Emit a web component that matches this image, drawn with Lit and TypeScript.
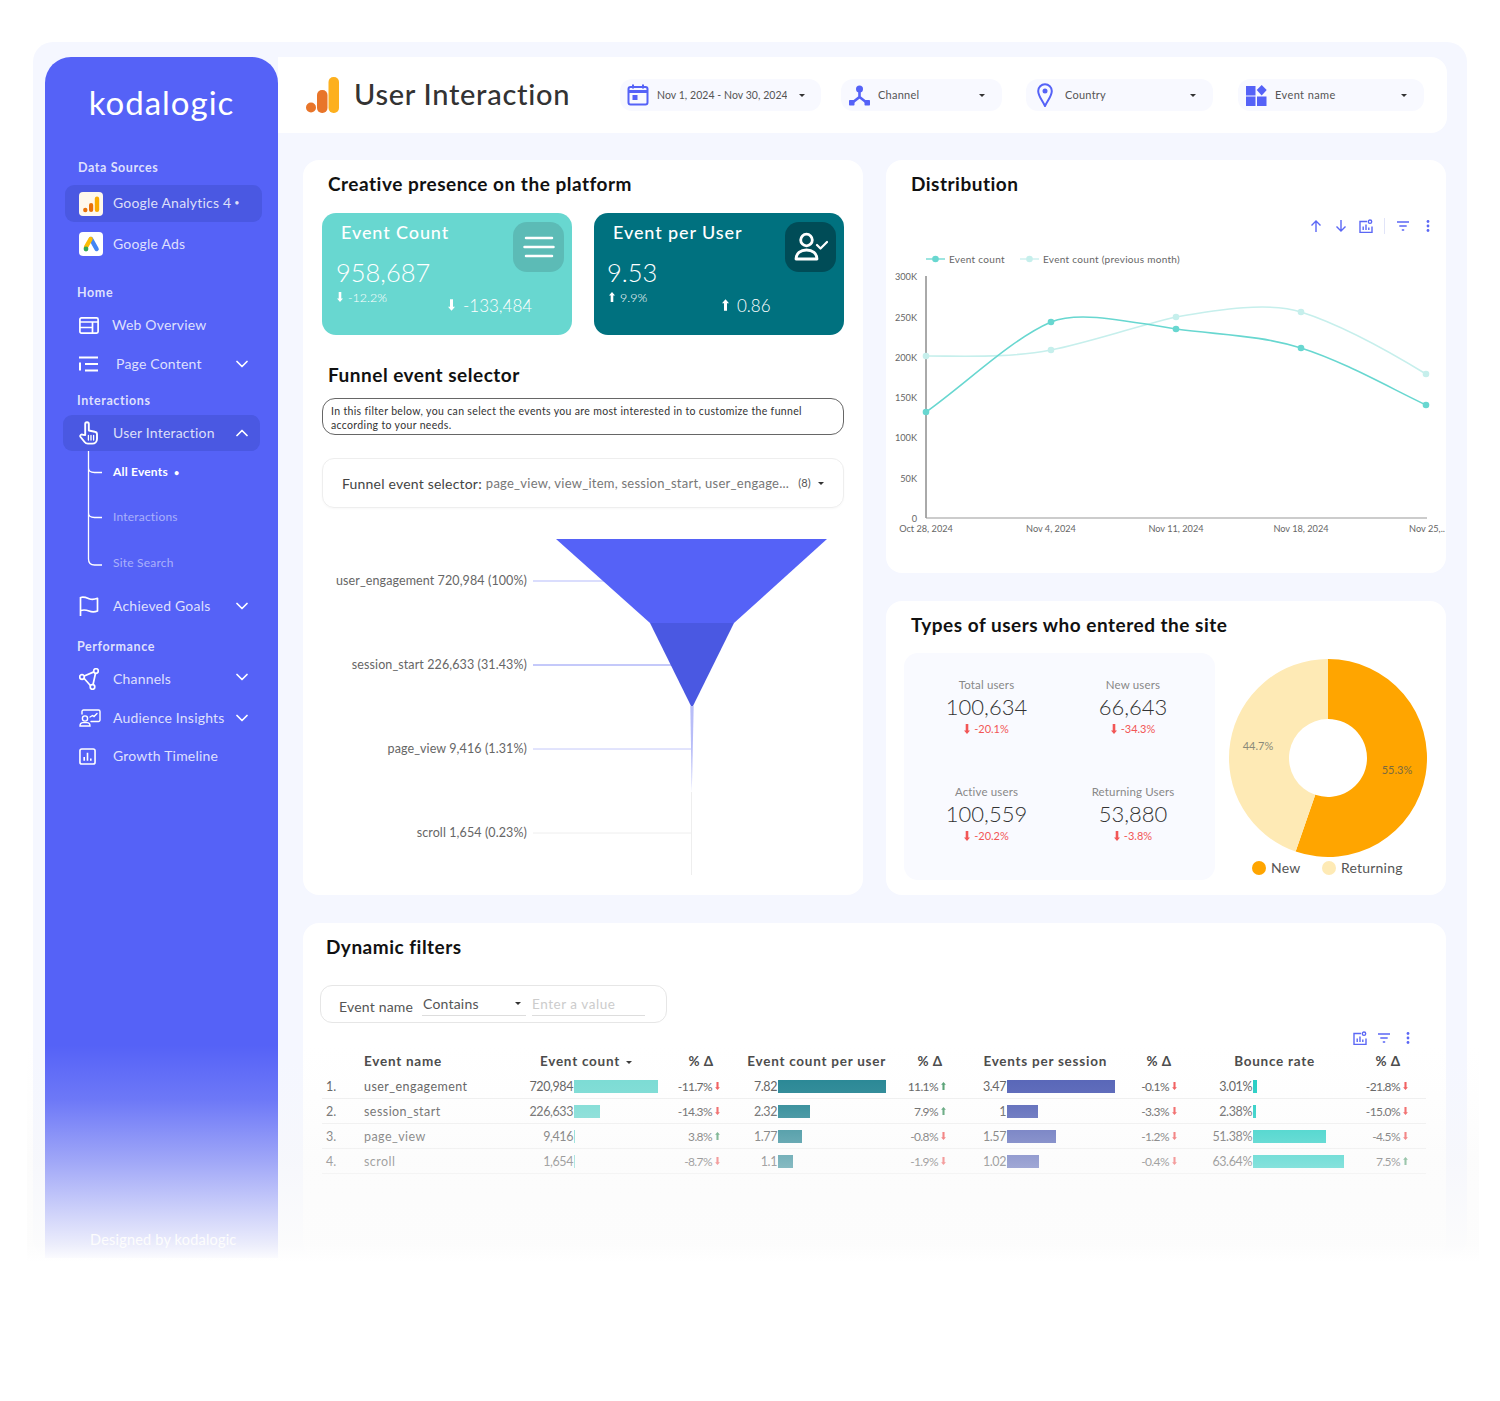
import { LitElement, html, css, svg } from "lit";
import { customElement } from "lit/decorators.js";

const W = "#fff";
const I = {
  ga: html`<svg viewBox="0 0 24 24" width="24" height="24"><rect width="24" height="24" rx="4" fill="#fff8ec"/><circle cx="6.3" cy="18" r="2.2" fill="#e8710a"/><rect x="10" y="11" width="4.2" height="9" rx="2.1" fill="#e8710a"/><rect x="15.8" y="4.5" width="4.4" height="15.5" rx="2.2" fill="#f9ab00"/></svg>`,
  ads: html`<svg viewBox="0 0 24 24" width="24" height="24"><rect width="24" height="24" rx="4" fill="#fff"/><path d="M12 7 L17.6 17" stroke="#4285f4" stroke-width="4.4" stroke-linecap="round"/><path d="M11.6 7 L7 15" stroke="#fbbc04" stroke-width="4.4" stroke-linecap="round"/><circle cx="7" cy="17" r="2.4" fill="#34a853"/></svg>`,
  web: html`<svg viewBox="0 0 20 17" width="20" height="17" fill="none" stroke="#fff" stroke-width="1.7"><rect x=".9" y=".9" width="18.2" height="15.2" rx="1.5"/><path d="M1 5h18M1 10.5h12.5M13.5 5v11" /></svg>`,
  list: html`<svg viewBox="0 0 20 16" width="20" height="16" fill="none" stroke="#fff" stroke-width="2"><path d="M0 1.5h19M6 8h13M6 14.5h13M1 6.5v8"/></svg>`,
  hand: html`<svg viewBox="0 0 20 24" width="20" height="24" fill="none" stroke="#fff" stroke-width="1.9" stroke-linejoin="round" stroke-linecap="round"><path d="M6.2 14 V3 a1.8 1.8 0 0 1 3.6 0 V9.5 l6 1.3 a2.6 2.6 0 0 1 2.2 2.6 V18 a4.6 4.6 0 0 1 -4.6 4.6 H8.8 a4 4 0 0 1 -3.2 -1.6 L1.6 16 a1.6 1.6 0 0 1 2.4 -2.1 Z"/><path d="M9.4 14.5v4.5M12 14.5v4.5M14.6 14.5v4.5" stroke-width="1.3"/></svg>`,
  flag: html`<svg viewBox="0 0 20 22" width="20" height="22" fill="none" stroke="#fff" stroke-width="1.7" stroke-linejoin="round"><path d="M1.5 21V2"/><path d="M1.5 2.5 c3.500 -1 6 .2 8.500 1.200 s5.500 .8 8.500 -.4 V16 c-3 1.200 -6 1 -8.500 0 s-5 -1.500 -8.500 -.5"/></svg>`,
  channels: html`<svg viewBox="0 0 20 22" width="20" height="22" fill="none" stroke="#fff" stroke-width="1.7"><circle cx="3" cy="9" r="2.300"/><circle cx="17" cy="3" r="2.300"/><circle cx="13.500" cy="19" r="2.300"/><path d="M5.200 8 L14.900 3.900M16.500 5.300 L14 16.800M5 10.300 L11.600 17.700"/></svg>`,
  aud: html`<svg viewBox="0 0 22 18" width="22" height="18" fill="none" stroke="#fff" stroke-width="1.4" stroke-linecap="round"><path d="M3 5V2.500A1.500 1.500 0 0 1 4.500 1H19.500A1.500 1.500 0 0 1 21 2.500V11A1.500 1.500 0 0 1 19.500 12.500H12"/><circle cx="6" cy="9.500" r="2.600"/><path d="M1 17c0-2.400 1.200-3.400 3-3.400h4c1.800 0 3 1 3 3.400z"/><path d="M11 8l2.500-1.500 1.500 1 3-3" /></svg>`,
  growth: html`<svg viewBox="0 0 18 18" width="17" height="17" fill="none" stroke="#fff" stroke-width="1.700"><rect x="1" y="1" width="16" height="16" rx="2"/><path d="M5.500 9.500v4M9 5v8.500M12.500 11v2.500"/></svg>`,
  cal: html`<svg viewBox="0 0 22 22" width="22" height="22" fill="none" stroke="#5562f7" stroke-width="2"><rect x="1.500" y="3" width="19" height="17.500" rx="2"/><path d="M1.500 7.500h19" stroke-width="3"/><path d="M6 .5v4M16 .5v4"/><rect x="5.500" y="11" width="5" height="5" fill="#5562f7" stroke="none"/></svg>`,
  chan: html`<svg viewBox="0 0 21 21" width="21" height="21"><circle cx="10.500" cy="4" r="3.500" fill="#5562f7"/><path d="M10.500 6v6L3.500 17.500M10.500 12l7 5.500" fill="none" stroke="#5562f7" stroke-width="2.600"/><rect x="0" y="15" width="5.500" height="5.500" rx=".8" fill="#5562f7"/><rect x="15.500" y="15" width="5.500" height="5.500" rx=".8" fill="#5562f7"/></svg>`,
  pin: html`<svg viewBox="0 0 16 24" width="16" height="24" fill="none" stroke="#5562f7" stroke-width="2"><path d="M8 23 C5 17 1.200 13 1.200 8 a6.800 6.800 0 0 1 13.600 0 C14.800 13 11 17 8 23Z"/><circle cx="8" cy="8" r="2.500" fill="#5562f7" stroke="none"/></svg>`,
  grid: html`<svg viewBox="0 0 21 21" width="21" height="21" fill="#5562f7"><rect x="0" y="1" width="9.500" height="9.500"/><rect x="0" y="11.500" width="9.500" height="9.500"/><rect x="11" y="11.500" width="9.500" height="9.500"/><path d="M15.700 0 L20.700 5 L15.700 10.500 L10.700 5Z"/></svg>`,
  menu: html`<svg viewBox="0 0 32 26" width="32" height="26" fill="none" stroke="#fff" stroke-width="2.500" stroke-linecap="round"><path d="M3 4h26M1.500 13h29M3 22h26"/></svg>`,
  usr: html`<svg viewBox="0 0 34 30" width="34" height="30" fill="none" stroke="#fff" stroke-width="2.800" stroke-linecap="round" stroke-linejoin="round"><circle cx="12.500" cy="8" r="5.800"/><path d="M2 27c0-5.500 4.500-9 10.500-9s10.500 3.500 10.500 9z"/><path d="M23 13l3.500 3.500L33 10" stroke-width="2.200"/></svg>`,
  up: html`<svg class="t" viewBox="0 0 14 14" width="14" height="14" fill="none" stroke="#5b67f5" stroke-width="1.400"><path d="M7 13V2M2.500 6.500L7 2l4.500 4.500"/></svg>`,
  dn: html`<svg class="t" viewBox="0 0 14 14" width="14" height="14" fill="none" stroke="#5b67f5" stroke-width="1.400"><path d="M7 1v11M2.500 7.500L7 12l4.500-4.500"/></svg>`,
  cog: html`<svg class="t" viewBox="0 0 14 14" width="14" height="14" fill="none" stroke="#5b67f5" stroke-width="1.400"><path d="M8 2.500H1v11h12V7.500"/><circle cx="11" cy="2.700" r="1.700"/><path d="M4.200 11V7.500M7 11V5.500M9.800 11V8.500"/></svg>`,
  fil: html`<svg class="t" viewBox="0 0 14 14" width="14" height="14" fill="none" stroke="#5b67f5" stroke-width="1.300"><path d="M1 3h12M3.300 7h7.400M5.800 11h2.400"/></svg>`,
  dots: html`<svg class="t" viewBox="0 0 14 14" width="14" height="14" fill="#5b67f5"><circle cx="7" cy="2.500" r="1.400"/><circle cx="7" cy="7" r="1.400"/><circle cx="7" cy="11.500" r="1.400"/></svg>`,
};

const chev = (up = false) => html`<svg class="chev" viewBox="0 0 12 8" width="12" height="8" fill="none" stroke="#fff" stroke-width="1.700" stroke-linecap="round" stroke-linejoin="round"><path d=${up ? "M1 6.500L6 1.500l5 5" : "M1 1.500l5 5 5-5"}/></svg>`;
const arrow = (up: boolean, c: string) => html`<svg class="arr" viewBox="0 0 6 10" width="6" height="10" fill=${c}><path d=${up ? "M3 0L6 3.500H4.300V10H1.700V3.500H0Z" : "M3 10L6 6.500H4.300V0H1.700V6.500H0Z"}/></svg>`;
const caret = html`<span class="caret"></span>`;
const dot = html`<span class="dot">•</span>`;

const rows = [
  ["1.", "user_engagement", 720984, "-11.7%", 7.82, "11.1%", 3.47, "-0.1%", 3.01, "-21.8%"],
  ["2.", "session_start", 226633, "-14.3%", 2.32, "7.9%", 1, "-3.3%", 2.38, "-15.0%"],
  ["3.", "page_view", 9416, "3.8%", 1.77, "-0.8%", 1.57, "-1.2%", 51.38, "-4.5%"],
  ["4.", "scroll", 1654, "-8.7%", 1.1, "-1.9%", 1.02, "-0.4%", 63.64, "7.5%"],
] as const;

const pct = (s: string) => {
  const up = !s.startsWith("-");
  return html`<span class="pct">${s}${arrow(up, up ? "#4a9a6a" : "#f05050")}</span>`;
};
const bar = (w: number, cls: string) => html`<span class="barcell"><i class=${"bar " + cls} style="width:${Math.max(w, 1)}px"></i></span>`;

const kpis = [
  ["Total users", "100,634", "-20.1%"],
  ["New users", "66,643", "-34.3%"],
  ["Active users", "100,559", "-20.2%"],
  ["Returning Users", "53,880", "-3.8%"],
];

const ax = [["300K", 276], ["250K", 317], ["200K", 357], ["150K", 397], ["100K", 437], ["50K", 478], ["0", 518]] as const;
const xs = [["Oct 28, 2024", 926], ["Nov 4, 2024", 1051], ["Nov 11, 2024", 1176], ["Nov 18, 2024", 1301], ["Nov 25,..", 1426]] as const;
const s1 = [[926, 412], [1051, 322], [1176, 329], [1301, 348], [1426, 405]];
const s2 = [[926, 356], [1051, 350], [1176, 317], [1301, 312], [1426, 374]];

@customElement("app-root")
export class AppRoot extends LitElement {
  static styles = css`
    :host { display: block; position: relative; height: 1401px; overflow: hidden; background: #fff;
      font-family: "Lato", "Open Sans", sans-serif; color: #333; padding: 42px 33px 0; box-sizing: border-box; }
    * { box-sizing: border-box; }
    svg { display: block; flex: none; }
    .frame { height: 1216px; background: #f5f7ff; border-radius: 20px; display: flex; padding: 15px 20px 0 12px; }

    .side { width: 233px; background: #5562f7; border-radius: 26px 26px 0 0; color: #fff; display: flex; flex-direction: column; flex: none; }
    .logo { height: 92px; display: flex; align-items: center; justify-content: center; padding-bottom: 2px; font-size: 33px; font-weight: 400; letter-spacing: 1px; }
    .nav { display: grid; grid-template-rows: 36px 37px 44px 4px 44px 22px 56px 16px 7px 36px 134px 42px 38px 28px 50px 26px; }
    .lab { align-self: center; font-size: 12.5px; font-weight: 700; color: rgba(255,255,255,.82); margin-left: 32px; letter-spacing: .6px; }
    .lab.d { margin-left: 33px; }
    .it { display: flex; align-items: center; margin-left: 18px; width: 197px; padding: 0 0 2px 16px; font-size: 14px; font-weight: 400; color: rgba(255,255,255,.82); letter-spacing: .2px; white-space: nowrap; }
    .it.s { margin-left: 20px; width: 197px; padding-left: 14px; }
    .on { background: #4a58e2; border-radius: 9px; }
    .ic { width: 34px; flex: none; display: flex; margin-top: 2px; }
    .ic.n { width: 33px; }
    .ic.w { width: 37px; }
    .it .chev { margin-left: auto; margin-right: 12px; margin-top: 2px; }
    .it.hi .chev { transform: translateY(-2px); }
    .dot { font-size: 9px; margin-left: 3px; }
    .sub { position: relative; display: grid; grid-template-rows: 42px 48px 44px; }
    .sub svg { position: absolute; left: 42px; top: 0; }
    .sub div { margin-left: 68px; align-self: center; font-size: 12px; color: rgba(255,255,255,.5); letter-spacing: .2px; padding-bottom: 2px; }
    .sub .cur { color: #fff; font-weight: 700; }
    .foot { margin-top: auto; margin-left: 45px; height: 18px; margin-bottom: 9px; font-size: 14.500px; color: #fff; letter-spacing: .2px; white-space: nowrap; }

    .main { flex: 1; min-width: 0; display: flex; flex-direction: column; }
    .top { height: 76px; background: #fff; border-radius: 0 16px 16px 0; display: flex; align-items: center; padding-left: 28px; flex: none; }
    .ttl { margin-left: 15px; width: 266px; font-size: 29px; font-weight: 500; color: #333; letter-spacing: .7px; white-space: nowrap; padding-bottom: 4px; }
    .pill { height: 32px; border-radius: 12px; background: #f8f9ff; display: flex; align-items: center; font-size: 11px; color: #555; letter-spacing: .25px; padding-left: 8px; }
    .pill .lbl { overflow: hidden; white-space: nowrap; flex: 1; margin-left: 8px; padding-bottom: 2px; }
    .pill .caret { margin: 0 17px 0 0; }
    .p1 { width: 201px; padding-left: 7px; }
    .p1 .lbl { flex: none; width: 130px; margin-right: 12px; font-size: 10.500px; letter-spacing: .05px; padding-bottom: 0; }
    .p2 { width: 161px; margin-left: 20px; }
    .p3 { width: 187px; margin-left: 24px; padding-left: 11px; }
    .p3 .lbl { margin-left: 12px; }
    .p4 { width: 186px; margin-left: 25px; }
    .p4 .lbl { letter-spacing: .4px; }
    .caret { display: inline-block; width: 0; height: 0; border: 3px solid transparent; border-top: 3.500px solid #333; border-bottom: 0; flex: none; }

    .body { flex: 1; padding: 27px 1px 0 25px; display: grid; grid-template-columns: 560px 560px; column-gap: 23px; grid-template-rows: 413px 294px 1fr; row-gap: 28px; }
    .card { background: #fff; border-radius: 16px; padding-top: 12px; min-width: 0; }
    .c-left { grid-row: span 2; padding: 12px 19px 0; }
    .c-wide { grid-column: span 2; padding: 12px 0 0 17px; }
    h2 { margin: 0; font-size: 19px; height: 24px; line-height: 24px; font-weight: 700; color: #111; letter-spacing: .5px; white-space: nowrap; }
    .c-left h2 { margin-left: 6px; }
    .c-right h2 { margin-left: 25px; }
    .c-wide h2 { margin-left: 6px; }
    .kr { display: grid; grid-template-columns: 250px 250px; gap: 22px; margin-top: 17px; }
    .kpi { height: 122px; border-radius: 14px; padding: 9px 8px 0 14px; color: #fff; display: grid; grid-template-columns: 1fr 51px; grid-template-rows: 22px 41px auto; background: #68d7d0; }
    .kpi.dark { background: #00717f; padding-left: 13px; }
    .kpi h3 { margin: 0; padding-left: 5px; font-size: 18px; line-height: 20px; font-weight: 500; letter-spacing: .9px; white-space: nowrap; }
    .dark h3 { padding-left: 6px; }
    .ib { grid-column: 2; grid-row: 1 / span 2; height: 50px; border-radius: 14px; background: #5cbbb6; display: flex; align-items: center; justify-content: center; }
    .dark .ib { background: #004c57; }
    .val { font-size: 25.500px; font-weight: 300; line-height: 24px; padding-top: 16px; height: 41px; }
    .dl { grid-column: 1 / span 2; display: flex; align-items: flex-start; }
    .dl .a { width: 112px; display: flex; align-items: center; gap: 5px; height: 24px; font-size: 12.500px; font-weight: 300; padding-left: 1px; }
    .dark .dl .a { width: 115px; padding-left: 2px; }
    .dl .b { display: flex; align-items: center; gap: 8px; height: 40px; font-size: 17px; font-weight: 300; }
    .dl .b .arr { width: 7px; height: 12px; }
    h2.f { margin-top: 28px; }
    .note { margin-top: 11px; height: 37px; border: 1px solid #666; border-radius: 13px; padding: 6px 8px; font-size: 10.500px; line-height: 13.500px; color: #333; letter-spacing: .34px; }
    .sel { margin-top: 23px; height: 50px; border: 1px solid #eee; border-radius: 12px; display: flex; align-items: center; padding: 0 19px; box-shadow: 0 1px 2px rgba(0,0,0,.03); font-size: 14px; color: #444; white-space: nowrap; letter-spacing: .2px; }
    .sel .v { font-size: 13px; color: #777; margin-left: 4px; flex: 1; overflow: hidden; letter-spacing: .25px; }
    .sel .n { font-size: 11px; color: #555; margin: 0 7px 0 3px; transform: translateY(-1px); }
    .funnel text { font-size: 12.500px; fill: #666; text-anchor: end; letter-spacing: .1px; }

    .tools { display: flex; justify-content: flex-end; align-items: center; }
    .t1 { margin-top: 22px; height: 16px; padding-right: 11px; gap: 11px; }
    .t1 .sep { width: 1px; height: 16px; background: #e1e4f8; margin: 0; }
    .chart text { font-size: 9.200px; fill: #666; }
    .chart .lg { font-size: 10px; letter-spacing: .3px; }
    .chart { margin-top: 6px; }

    .trow { display: flex; margin: 16px 0 0 18px; }
    .kbox { width: 311px; height: 227px; background: #f9faff; border-radius: 14px; padding: 24px 9px 0; display: grid; grid-template-columns: 147px 146px; grid-auto-rows: 107px; text-align: center; }
    .kbox .l { height: 16px; line-height: 16px; font-size: 11.500px; color: #888; letter-spacing: .15px; }
    .kbox .v { height: 28px; line-height: 28px; font-size: 22px; color: #333; font-weight: 300; }
    .kbox .d { height: 16px; font-size: 11px; color: #f25656; display: flex; justify-content: center; align-items: center; gap: 4px; padding-bottom: 1px; }
    .pie text { font-size: 11px; }
    .pie .lg { font-size: 14px; letter-spacing: .2px; }

    .flt { width: 347px; height: 38px; margin-top: 26px; border: 1px solid #e6e6e6; border-radius: 12px; display: flex; font-size: 14px; color: #555; letter-spacing: .2px; }
    .flt .k { margin: 12px 0 0 18px; width: 83px; white-space: nowrap; }
    .flt .c { margin: 9px 0 0 0; width: 104px; height: 21px; border-bottom: 1px solid #ddd; display: flex; justify-content: space-between; align-items: flex-start; padding: 0 5px 0 1px; font-size: 14px; }
    .flt .c .caret { margin-top: 7px; }
    .flt .e { margin: 9px 0 0 6px; width: 113px; height: 21px; border-bottom: 1px solid #ddd; font-size: 13.500px; color: #ccc; padding-top: 1px; letter-spacing: .55px; }
    .t2 { margin-top: 7px; height: 16px; padding-right: 31px; gap: 10px; width: 1126px; }
    .tbl { margin: 3px 0 0 2px; width: 1104px; }
    .tr { display: grid; grid-template-columns: 42px 150px 60px 90px 56px 58px 112px 56px 61px 112px 58px 76px 95px 60px 18px; height: 25px; align-items: center; border-bottom: 1px solid #eee; font-size: 12.500px; color: #555; white-space: nowrap; letter-spacing: .45px; }
    .tr.h { border: 0; font-size: 13.500px; font-weight: 700; color: #444; letter-spacing: .75px; padding-bottom: 2px; }
    .tr.h .caret { margin-left: 6px; transform: translateY(-2px); }
    .tr.h span { text-align: right; }
    .tr.h .nm { text-align: left; }
    .sp2 { grid-column: span 2; }
    .h1 { padding-right: 32px; } .h2 { padding-right: 6px; } .h3 { padding-right: 4px; } .h4 { padding-right: 3px; }
    .h5 { padding-right: 12px; } .h6 { padding-right: 5px; } .h7 { padding-right: 33px; } .h8 { padding-right: 7px; }
    .idx { padding-left: 4px; letter-spacing: 0; }
    .num { text-align: right; padding-right: 1px; letter-spacing: -.4px; }
    .barcell { display: flex; height: 13px; }
    .bar { display: block; height: 100%; }
    .b1 { background: #70d9d1; } .b2 { background: #167d8c; } .b3 { background: #4958b2; } .b4 { background: #14cbc0; }
    .pct { display: flex; justify-content: flex-end; align-items: center; gap: 3px; font-size: 12px; letter-spacing: -.6px; }
    .pct .arr { width: 5px; height: 8px; }

    .fade { position: absolute; left: 27px; width: 1452px; top: 1045px; height: 217px;
      background: linear-gradient(to bottom, rgba(248,248,248,0) 0%, rgba(248,248,248,.15) 25.3%, rgba(248,248,248,.46) 53.5%, rgba(252,252,252,.9) 92%, #fff 100%); }
  `;

  render() {
    const donut = (() => {
      const cx = 1328, cy = 758, R = 99, r = 39;
      const a = 0.553 * Math.PI * 2;
      const x1 = cx + R * Math.sin(a), y1 = cy - R * Math.cos(a);
      const x2 = cx + r * Math.sin(a), y2 = cy - r * Math.cos(a);
      return {
        orange: `M${cx},${cy - R} A${R},${R} 0 1 1 ${x1},${y1} L${x2},${y2} A${r},${r} 0 1 0 ${cx},${cy - r} Z`,
        cream: `M${x1},${y1} A${R},${R} 0 0 1 ${cx},${cy - R} L${cx},${cy - r} A${r},${r} 0 0 0 ${x2},${y2} Z`,
      };
    })();
    return html`
      <div class="frame">
        <aside class="side">
          <div class="logo">kodalogic</div>
          <nav class="nav">
            <div class="lab d">Data Sources</div>
            <div class="it s on"><span class="ic">${I.ga}</span>Google Analytics 4 ${dot}</div>
            <div class="it s"><span class="ic">${I.ads}</span>Google Ads</div>
            <div></div>
            <div class="lab">Home</div>
            <div class="it"><span class="ic n">${I.web}</span>Web Overview</div>
            <div class="it"><span class="ic w">${I.list}</span>Page Content ${chev()}</div>
            <div class="lab">Interactions</div>
            <div></div>
            <div class="it on"><span class="ic">${I.hand}</span>User Interaction ${chev(true)}</div>
            <div class="sub">
              <svg viewBox="0 0 20 134" width="20" height="134" fill="none" stroke="#fff" stroke-width="1.300"><path d="M1.500 0V108q0 6 6 6H15M1.500 17q0 4.500 6 4.500H15M1.500 62q0 4.500 6 4.500H15"/></svg>
              <div class="cur">All Events ${dot}</div>
              <div>Interactions</div>
              <div>Site Search</div>
            </div>
            <div class="it"><span class="ic">${I.flag}</span>Achieved Goals ${chev()}</div>
            <div class="lab">Performance</div>
            <div class="it hi"><span class="ic">${I.channels}</span>Channels ${chev()}</div>
            <div class="it"><span class="ic">${I.aud}</span>Audience Insights ${chev()}</div>
            <div class="it"><span class="ic">${I.growth}</span>Growth Timeline</div>
          </nav>
          <div class="foot">Designed by kodalogic</div>
        </aside>
        <div class="main">
          <header class="top">
            <svg viewBox="0 0 33 36" width="33" height="36"><circle cx="5" cy="30.500" r="5" fill="#e8752a"/><rect x="11" y="13" width="10.500" height="23" rx="5" fill="#e8752a"/><rect x="22.500" y="0" width="10.500" height="36" rx="5" fill="#fdb01e"/></svg>
            <div class="ttl">User Interaction</div>
            <div class="pill p1">${I.cal}<span class="lbl">Nov 1, 2024 - Nov 30, 2024</span>${caret}</div>
            <div class="pill p2">${I.chan}<span class="lbl">Channel</span>${caret}</div>
            <div class="pill p3">${I.pin}<span class="lbl">Country</span>${caret}</div>
            <div class="pill p4">${I.grid}<span class="lbl">Event name</span>${caret}</div>
          </header>
          <div class="body">
            <section class="card c-left">
              <h2>Creative presence on the platform</h2>
              <div class="kr">
                <div class="kpi">
                  <h3>Event Count</h3><div class="ib">${I.menu}</div>
                  <div class="val">958,687</div>
                  <div class="dl"><span class="a">${arrow(false, W)}-12.2%</span><span class="b">${arrow(false, W)}-133,484</span></div>
                </div>
                <div class="kpi dark">
                  <h3>Event per User</h3><div class="ib">${I.usr}</div>
                  <div class="val">9.53</div>
                  <div class="dl"><span class="a">${arrow(true, W)}9.9%</span><span class="b">${arrow(true, W)}0.86</span></div>
                </div>
              </div>
              <h2 class="f">Funnel event selector</h2>
              <div class="note">In this filter below, you can select the events you are most interested in to customize the funnel according to your needs.</div>
              <div class="sel">Funnel event selector:<span class="v">page_view, view_item, session_start, user_engage...</span><span class="n">(8)</span>${caret}</div>
              <svg class="funnel" viewBox="322 508 522 380" width="522" height="380">
                <path d="M533 581H610" stroke="#b6bbfb" stroke-width="1.200"/>
                <path d="M533 665H675" stroke="#8a93f5" stroke-width="1"/>
                <path d="M533 749H691" stroke="#c4c8fa" stroke-width="1"/>
                <path d="M533 833H691" stroke="#eee" stroke-width="1"/>
                <path d="M556 539H827L734 623H650Z" fill="#5562f7"/>
                <path d="M650 623H734L692 708Z" fill="#4a58e2"/>
                <path d="M690.300 706H693.700L691.800 792Z" fill="#b8bdf8"/>
                <path d="M691.500 792V875" stroke="#eee" stroke-width="1"/>
                <text x="527" y="585">user_engagement 720,984 (100%)</text>
                <text x="527" y="669">session_start 226,633 (31.43%)</text>
                <text x="527" y="753">page_view 9,416 (1.31%)</text>
                <text x="527" y="837">scroll 1,654 (0.23%)</text>
              </svg>
            </section>

            <section class="card c-right">
              <h2>Distribution</h2>
              <div class="tools t1">${I.up}${I.dn}${I.cog}<i class="sep"></i>${I.fil}${I.dots}</div>
              <svg class="chart" viewBox="886 240 560 310" width="560" height="310">
                <path d="M926 259H945" stroke="#68d7d0" stroke-width="1.300"/><circle cx="935.500" cy="259" r="3.300" fill="#68d7d0"/>
                <text class="lg" x="949" y="263">Event count</text>
                <path d="M1020 259H1039" stroke="#c6efec" stroke-width="1.300"/><circle cx="1029.500" cy="259" r="3.300" fill="#c6efec"/>
                <text class="lg" x="1043" y="263">Event count (previous month)</text>
                ${ax.map(([t, y]) => svg`<text x="917" y=${y + 3.5} text-anchor="end">${t}</text>`)}
                ${xs.map(([t, x], i) => svg`<text x=${i == 4 ? 1445 : x} y="532" text-anchor=${i == 4 ? "end" : "middle"}>${t}</text>`)}
                <path d="M926 276V518" stroke="#555" stroke-width="1"/>
                <path d="M926 518H1427" stroke="#999" stroke-width="1"/>
                <path d="M926,356 C968,356 1010,358 1051,350 C1090,342 1130,328 1176,317 C1220,309 1270,302 1301,312 C1345,326 1390,352 1426,374" fill="none" stroke="#c6efec" stroke-width="1.600"/>
                <path d="M926,412 C968,382 1010,340 1051,322 C1076,312 1110,318 1176,329 C1220,335 1260,335 1301,348 C1345,362 1390,388 1426,405" fill="none" stroke="#68d7d0" stroke-width="1.600"/>
                ${s2.map(([x, y]) => svg`<circle cx=${x} cy=${y} r="3.300" fill="#c6efec"/>`)}
                ${s1.map(([x, y]) => svg`<circle cx=${x} cy=${y} r="3.300" fill="#68d7d0"/>`)}
              </svg>
            </section>

            <section class="card c-right">
              <h2>Types of users who entered the site</h2>
              <div class="trow">
                <div class="kbox">
                  ${kpis.map(([l, v, d]) => html`<div><div class="l">${l}</div><div class="v">${v}</div><div class="d">${arrow(false, "#f25656")}${d}</div></div>`)}
                </div>
                <svg class="pie" viewBox="1215 653 231 227" width="231" height="227">
                  <path d=${donut.orange} fill="#ffa500"/>
                  <path d=${donut.cream} fill="#feeab5"/>
                  <text x="1258" y="750" text-anchor="middle" fill="#8a8a7a">44.7%</text>
                  <text x="1397" y="774" text-anchor="middle" fill="#7a6a40">55.3%</text>
                  <circle cx="1259" cy="868" r="7" fill="#ffa500"/>
                  <text class="lg" x="1271" y="873" fill="#555">New</text>
                  <circle cx="1329" cy="868" r="7" fill="#feeab5"/>
                  <text class="lg" x="1341" y="873" fill="#555">Returning</text>
                </svg>
              </div>
            </section>

            <section class="card c-wide">
              <h2>Dynamic filters</h2>
              <div class="flt"><span class="k">Event name</span><span class="c">Contains ${caret}</span><span class="e">Enter a value</span></div>
              <div class="tools t2">${I.cog}${I.fil}${I.dots}</div>
              <div class="tbl">
                <div class="tr h">
                  <span></span><span class="nm">Event name</span>
                  <span class="sp2 h1">Event count<span class="caret"></span></span><span class="h2">% Δ</span>
                  <span class="sp2 h3">Event count per user</span><span class="h4">% Δ</span>
                  <span class="sp2 h5">Events per session</span><span class="h6">% Δ</span>
                  <span class="sp2 h7">Bounce rate</span><span class="h8">% Δ</span>
                </div>
                ${rows.map((r) => html`<div class="tr">
                  <span class="idx">${r[0]}</span><span>${r[1]}</span>
                  <span class="num">${(r[2] as number).toLocaleString("en-US")}</span>${bar(((r[2] as number) / 720984) * 84, "b1")}${pct(r[3] as string)}
                  <span class="num">${r[4]}</span>${bar(((r[4] as number) / 7.82) * 108, "b2")}${pct(r[5] as string)}
                  <span class="num">${r[6]}</span>${bar(((r[6] as number) / 3.47) * 108, "b3")}${pct(r[7] as string)}
                  <span class="num">${(r[8] as number).toFixed(2)}%</span>${bar(((r[8] as number) / 63.64) * 91, "b4")}${pct(r[9] as string)}
                </div>`)}
              </div>
            </section>
          </div>
        </div>
      </div>
      <div class="fade"></div>
    `;
  }
}
